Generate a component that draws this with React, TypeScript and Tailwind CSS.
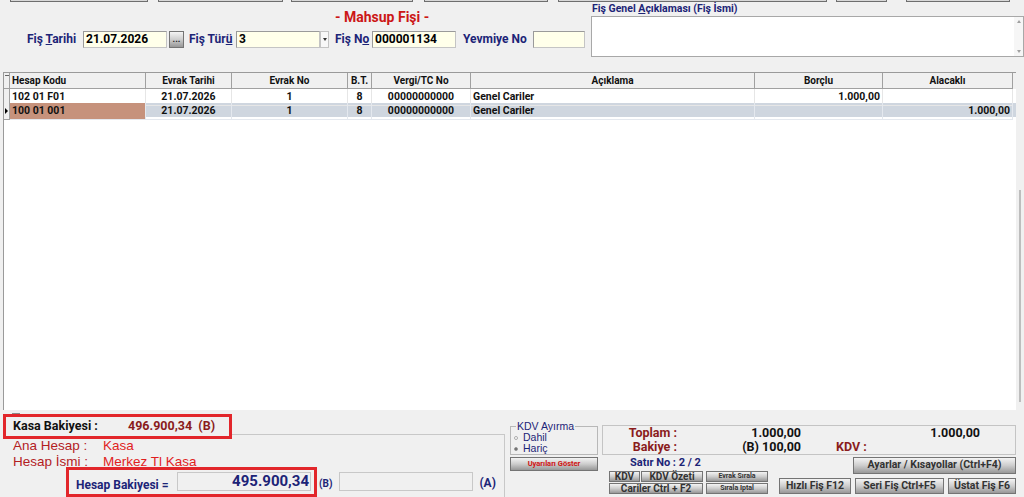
import React from 'react'

const navy = 'text-[#1c2477]'

const topTabs = [
    'ml-[10px] w-[138px]',
    'ml-[10px] w-[125px]',
    'ml-[8px] w-[122px]',
    'ml-[11px] w-[124px]',
    'ml-[10px] w-[269px]',
    'ml-[9px] w-[51px]',
    'ml-[19px] w-[104px]',
]

const cols = 'grid grid-cols-[6px_136px_86px_116px_24px_99px_284px_128px_130px]'

const rows = [
    { kod: '102 01 F01', tarih: '21.07.2026', no: '1', bt: '8', vergi: '00000000000', aciklama: 'Genel Cariler', borc: '1.000,00', alacak: '', sel: false },
    { kod: '100 01 001', tarih: '21.07.2026', no: '1', bt: '8', vergi: '00000000000', aciklama: 'Genel Cariler', borc: '', alacak: '1.000,00', sel: true },
]

function Btn({ children, className = '' }: { children: React.ReactNode; className?: string }) {
    return (
        <div className={`flex items-center justify-center border border-[#747474] bg-linear-to-b from-[#f4f4f4] via-[#cdcdcd] to-[#989898] font-bold leading-none whitespace-nowrap ${className}`}>
            {children}
        </div>
    )
}

function Field({ value, className = '' }: { value: string; className?: string }) {
    return (
        <div className={`h-[17px] bg-[#ffffea] border border-[#c4c4c4] border-t-[#9a9a9a] border-l-[#9a9a9a] flex items-center pl-[2px] text-[12px] font-bold text-black ${className}`}>
            {value}
        </div>
    )
}

function Header() {
    return (
        <div className="h-[69px] flex">
            <div className="w-[588px] flex flex-col">
                <div className="mt-[6px] pl-[335px] text-[14px] leading-[16px] font-bold text-[#cc1616]">- Mahsup Fişi -</div>
                <div className={`mt-[5px] h-[18px] flex items-center text-[12px] font-bold ${navy}`}>
                    <span className="ml-[27px] w-[56px]">Fiş <u>T</u>arihi</span>
                    <Field value="21.07.2026" className="w-[84px]" />
                    <Btn className="ml-[2px] w-[15px] h-[17px] text-[9px] text-[#222]">...</Btn>
                    <span className="ml-[5px] w-[47px]">Fiş Tür<u>ü</u></span>
                    <Field value="3" className="w-[84px]" />
                    <div className="w-[9px] h-[17px] bg-[#f8f8f8] border border-[#c4c4c4] flex items-center justify-center">
                        <div className="w-0 h-0 border-x-[2.5px] border-x-transparent border-t-[3px] border-t-[#333]" />
                    </div>
                    <span className="ml-[6px] w-[37px]">Fiş N<u>o</u></span>
                    <Field value="000001134" className="w-[84px]" />
                    <span className="ml-[7px] w-[70px]">Yevmiye No</span>
                    <Field value="" className="w-[52px]" />
                </div>
            </div>
            <div className="flex-1 flex flex-col">
                <div className={`pl-[4px] text-[10.5px] leading-[12px] font-bold ${navy}`}>Fiş Genel <u>A</u>çıklaması (Fiş İsmi)</div>
                <div className="mt-[1px] ml-[3px] h-[41px] flex border border-[#a8a8a8] bg-white">
                    <div className="flex-1" />
                    <div className="w-[9px] bg-[#f6f6f6] flex flex-col items-center justify-between py-[3px]">
                        <div className="w-0 h-0 border-x-[2px] border-x-transparent border-b-[3px] border-b-[#a0a0a0]" />
                        <div className="w-0 h-0 border-x-[2px] border-x-transparent border-t-[3px] border-t-[#a0a0a0]" />
                    </div>
                </div>
            </div>
        </div>
    )
}

function Grid() {
    const head = 'border-r border-b border-[#a0a0a0] flex items-center justify-center'
    return (
        <div className="h-[338px] flex">
            <div className="ml-[3px] w-[1013px] bg-white border-l border-t border-[#9a9a9a]">
                <div className={`${cols} h-[16px] bg-[#f0f0f0] text-[10px] font-bold text-[#111]`}>
                    <div className="border-r border-b border-[#a0a0a0] flex justify-center pt-[2px]">
                        <div className="w-[4px] h-[1px] bg-[#666]" />
                    </div>
                    <div className="border-r border-b border-[#a0a0a0] flex items-center pl-[2px]">Hesap Kodu</div>
                    <div className={head}>Evrak Tarihi</div>
                    <div className={head}>Evrak No</div>
                    <div className={head}>B.T.</div>
                    <div className={head}>Vergi/TC No</div>
                    <div className={head}>Açıklama</div>
                    <div className={head}>Borçlu</div>
                    <div className={head}>Alacaklı</div>
                </div>
                {rows.map((r) => {
                    const c = `border-r border-b flex items-center ${r.sel ? 'border-[#e4e8ee]' : 'border-[#e6e6e6]'}`
                    return (
                        <div key={r.kod} className={`${cols} h-[14px] text-[10.5px] font-bold text-[#111] ${r.sel ? 'bg-[#cfd6df]' : 'bg-white'}`}>
                            <div className="border-r border-b border-[#a0a0a0] bg-[#f0f0f0] flex items-center justify-center">
                                {r.sel && <div className="w-0 h-0 border-y-[3px] border-y-transparent border-l-[3px] border-l-black" />}
                            </div>
                            <div className={`${c} pl-[2px] ${r.sel ? 'bg-[#c6927c]' : ''}`}>{r.kod}</div>
                            <div className={`${c} justify-center`}>{r.tarih}</div>
                            <div className={`${c} justify-center`}>{r.no}</div>
                            <div className={`${c} justify-center`}>{r.bt}</div>
                            <div className={`${c} justify-center`}>{r.vergi}</div>
                            <div className={`${c} pl-[2px]`}>{r.aciklama}</div>
                            <div className={`${c} justify-end pr-[2px]`}>{r.borc}</div>
                            <div className={`${c} justify-end pr-[2px]`}>{r.alacak}</div>
                        </div>
                    )
                })}
            </div>
            <div className="flex-1 flex justify-center">
                <div className="mt-[118px] w-[2px] h-[212px] bg-[#bdbdbd]" />
            </div>
        </div>
    )
}

function Footer() {
    return (
        <div className="h-[87px] flex">
            <div className="w-[508px] flex flex-col">
                <div className="h-[8px] pl-[12px] pt-[3px]">
                    <div className="w-[8px] h-[1px] bg-[#8a8a8a]" />
                </div>
                <div className="relative z-10 ml-[3px] w-[229px] h-[25px] border-[3px] border-[#e2262b] bg-[#f0f0f0] flex items-center pl-[7px] text-[12.5px] font-bold">
                    <span className="w-[115px] text-[#111]">Kasa Bakiyesi :</span>
                    <span className="text-[#8a1c1c] whitespace-pre">496.900,34  (B)</span>
                </div>
                <div className="-mt-[5px] ml-[3px] w-[502px] flex-1 border-t border-r border-[#c8c8c8] flex flex-col font-['Liberation_Sans',Arial,sans-serif] text-[13.5px]">
                    <div className="mt-[3px] h-[16px] flex items-center pl-[10px]">
                        <span className="w-[90px] text-[#b3201f]">Ana Hesap :</span>
                        <span className="text-[#e01e1e]">Kasa</span>
                    </div>
                    <div className="h-[16px] flex items-center pl-[10px]">
                        <span className="w-[90px] text-[#b3201f]">Hesap İsmi :</span>
                        <span className="text-[#e01e1e]">Merkez Tl Kasa</span>
                    </div>
                    <div className="-mt-[3px] flex items-start font-['Roboto',sans-serif]">
                        <div className="ml-[63px] w-[251px] h-[30px] border-[3px] border-[#e2262b] flex items-start pl-[7px] pt-[2px]">
                            <span className={`w-[101px] mt-[4px] text-[12px] font-bold ${navy}`}>Hesap Bakiyesi =</span>
                            <div className={`w-[134px] h-[19px] border border-[#c8c8c8] flex items-center justify-end pr-[1px] text-[15px] font-bold ${navy}`}>495.900,34</div>
                        </div>
                        <span className={`ml-[2px] mt-[9px] text-[10px] font-bold ${navy}`}>(B)</span>
                        <div className="ml-[7px] mt-[5px] w-[134px] h-[19px] border border-[#c8c8c8]" />
                        <span className={`ml-[6px] mt-[7px] text-[12px] font-bold ${navy}`}>(A)</span>
                    </div>
                </div>
            </div>

            <div className="ml-[2px] w-[88px] flex flex-col">
                <fieldset className="mt-[11px] h-[34px] border border-[#b8b8b8] pl-[3px] font-['Liberation_Sans',Arial,sans-serif] text-[10.5px] leading-[11px] text-[#1c2477]">
                    <legend className="ml-[2px] px-[1px]">KDV Ayırma</legend>
                    <div className="flex items-center gap-[5px]">
                        <div className="w-[4px] h-[4px] rounded-full border border-[#aaa] bg-white" />
                        <span>Dahil</span>
                    </div>
                    <div className="flex items-center gap-[5px]">
                        <div className="w-[4px] h-[4px] rounded-full border border-[#999] bg-[#666]" />
                        <span>Hariç</span>
                    </div>
                </fieldset>
                <Btn className="mt-[2px] h-[14px] text-[7.5px] text-[#d01414]">Uyarıları Göster</Btn>
            </div>

            <div className="ml-[4px] w-[414px] flex flex-col">
                <div className="mt-[15px] h-[30px] border border-[#c4c4c4] flex flex-col text-[12.5px] font-bold leading-[14px]">
                    <div className="h-[14px] flex items-center">
                        <span className="w-[74px] text-right text-[#8a1c1c]">Toplam :</span>
                        <span className="w-[124px] text-right text-[#111]">1.000,00</span>
                        <span className="w-[179px] text-right text-[#111]">1.000,00</span>
                    </div>
                    <div className="h-[14px] flex items-center">
                        <span className="w-[74px] text-right text-[#8a1c1c]">Bakiye :</span>
                        <span className="w-[124px] text-right text-[#111]">(B) 100,00</span>
                        <span className="ml-[35px] text-[#8a1c1c]">KDV :</span>
                    </div>
                </div>
                <div className="mt-[2px] flex">
                    <div className="w-[176px] flex flex-col">
                        <div className={`h-[13px] pl-[28px] flex items-center text-[11px] font-bold ${navy}`}>Satır No :  2 / 2</div>
                        <div className="mt-[1px] ml-[7px] flex gap-[3px]">
                            <div className="w-[94px] flex flex-col gap-[1px]">
                                <div className="flex gap-[1px]">
                                    <Btn className="w-[31px] h-[11px] text-[10px] text-[#333]">KDV</Btn>
                                    <Btn className="w-[62px] h-[11px] text-[10px] text-[#333]">KDV Özeti</Btn>
                                </div>
                                <Btn className="h-[11px] text-[10px] text-[#333]">Cariler Ctrl + F2</Btn>
                            </div>
                            <div className="w-[62px] flex flex-col gap-[1px]">
                                <Btn className="h-[11px] text-[7px] text-[#333]">Evrak Sırala</Btn>
                                <Btn className="h-[11px] text-[7px] text-[#333]">Sırala İptal</Btn>
                            </div>
                        </div>
                    </div>
                    <div className="ml-[2px] flex flex-col">
                        <Btn className="ml-[74px] w-[163px] h-[17px] text-[10.5px] text-[#333]">Ayarlar / Kısayollar (Ctrl+F4)</Btn>
                        <div className="mt-[4px] flex gap-[4px]">
                            <Btn className="w-[72px] h-[16px] text-[10.5px] text-[#333]">Hızlı Fiş F12</Btn>
                            <Btn className="w-[89px] h-[16px] text-[10.5px] text-[#333]">Seri Fiş Ctrl+F5</Btn>
                            <Btn className="w-[68px] h-[16px] text-[10.5px] text-[#333]">Üstat Fiş F6</Btn>
                        </div>
                    </div>
                </div>
            </div>
        </div>
    )
}

export default function App() {
    return (
        <div className="w-[1024px] h-[497px] overflow-hidden bg-[#f0f0f0] font-['Roboto',sans-serif] flex flex-col">
            <div className="h-[3px] flex">
                {topTabs.map((t) => (
                    <div key={t} className={`${t} h-[2px] bg-[#d8d8d8] border-x border-b border-[#6e6e6e]`} />
                ))}
            </div>
            <Header />
            <Grid />
            <Footer />
        </div>
    )
}
